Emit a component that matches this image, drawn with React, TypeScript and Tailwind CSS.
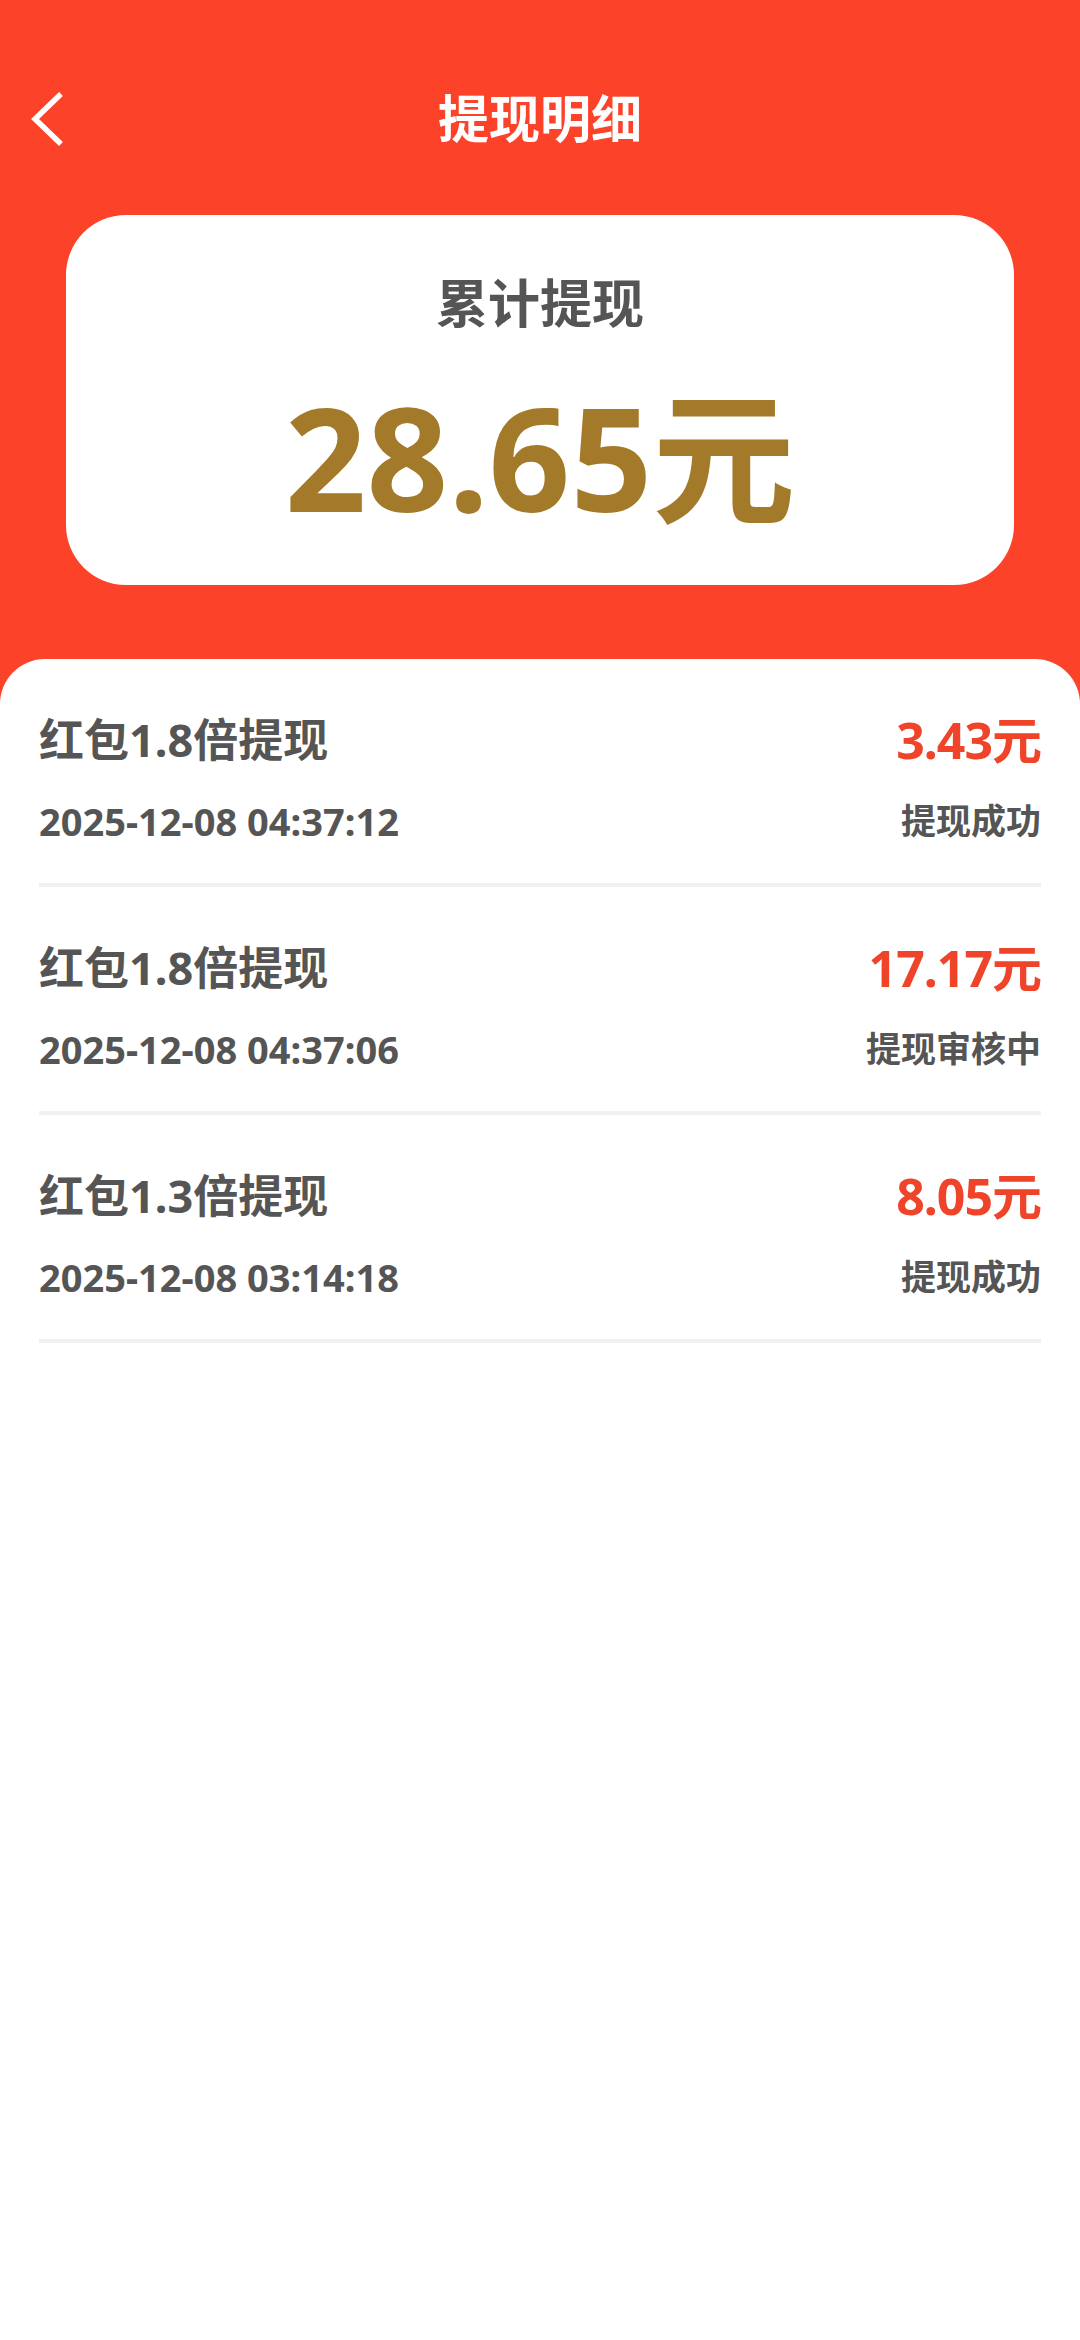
import React from "react";

const rows = [
  { title: "红包1.8倍提现", amount: "3.43元", time: "2025-12-08 04:37:12", status: "提现成功" },
  { title: "红包1.8倍提现", amount: "17.17元", time: "2025-12-08 04:37:06", status: "提现审核中" },
  { title: "红包1.3倍提现", amount: "8.05元", time: "2025-12-08 03:14:18", status: "提现成功" },
];

export default function App() {
  return (
    <div
      className="min-h-[2340px] w-[1080px] flex flex-col bg-[#fc4229]"
      style={{ fontFamily: '"Noto Sans", "Noto Sans CJK SC", sans-serif' }}
    >
      {/* nav bar */}
      <div className="relative mt-[68px] h-[100px] flex items-center justify-center">
        <svg
          className="absolute left-[26px] top-[20px]"
          width="42"
          height="60"
          viewBox="0 0 42 60"
          fill="none"
        >
          <path d="M35 6 L9 31 L35 56" stroke="white" strokeWidth="5.5" strokeLinecap="butt" strokeLinejoin="miter" />
        </svg>
        <div className="text-white text-[51px] leading-[60px] font-bold">提现明细</div>
      </div>

      {/* summary card */}
      <div className="mx-[66px] mt-[47px] h-[370px] rounded-[60px] bg-white flex flex-col items-center pt-[58px]">
        <div className="text-[#555555] text-[52px] leading-[60px] font-bold">累计提现</div>
        <div className="mt-[54px] text-[#a37a2a] text-[143px] leading-[140px] font-bold">28.65元</div>
      </div>

      {/* list panel */}
      <div className="mt-[74px] flex-1 bg-white rounded-t-[45px] px-[39px]">
        {rows.map((r, i) => (
          <div key={i} className="pt-[51px] pb-[37px] border-b-4 border-[#f0f0f0]">
            <div className="flex items-center justify-between h-[60px]">
              <div className="text-[#555555] text-[45px] leading-[60px] font-bold">{r.title}</div>
              <div className="text-[#f0442a] text-[50px] leading-[60px] font-bold tracking-[-1px]">{r.amount}</div>
            </div>
            <div className="mt-[26px] flex items-center justify-between h-[50px]">
              <div className="text-[#555555] text-[38px] leading-[50px] font-bold">{r.time}</div>
              <div className="text-[#555555] text-[35px] leading-[50px] font-bold">{r.status}</div>
            </div>
          </div>
        ))}
      </div>
    </div>
  );
}
